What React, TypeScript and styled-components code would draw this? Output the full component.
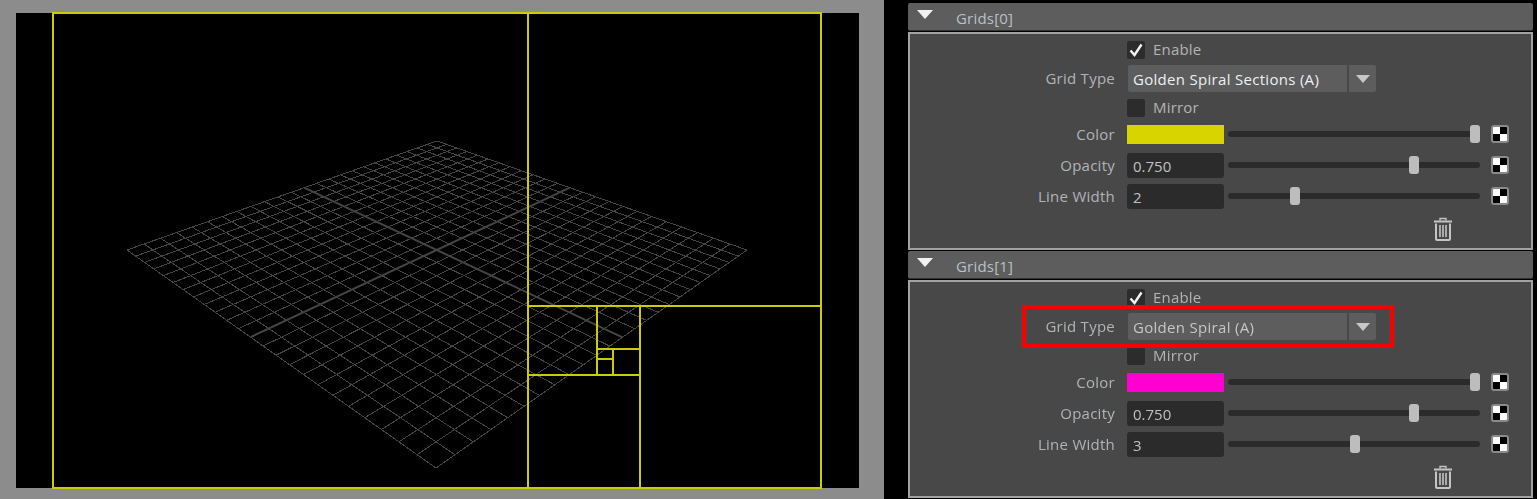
import { createGlobalStyle } from "styled-components";
import styled from "styled-components";

const GlobalStyle = createGlobalStyle`
  html, body {
    margin: 0;
    padding: 0;
    background: #000;
  }
  body {
    font-family: "Open Sans", "Noto Sans", sans-serif;
  }
`;

const Page = styled.div`
  width: 1537px;
  height: 499px;
  display: flex;
  overflow: hidden;
  background: #000;
`;

const LeftPane = styled.div`
  width: 884px;
  height: 499px;
  padding: 13px 25px 11px 16px;
  box-sizing: border-box;
  background: #8c8c8c;
`;

const Viewport = styled.div`
  width: 843px;
  height: 475px;
  background: #000;
`;

const ViewSvg = styled.svg`
  display: block;
  overflow: visible;
`;

const RightPane = styled.div`
  width: 625px;
  margin-left: 24px;
  padding-top: 3px;
  display: flex;
  flex-direction: column;
  filter: blur(0.35px);
`;

const Header = styled.div`
  height: 28px;
  box-sizing: border-box;
  display: flex;
  align-items: center;
  padding-left: 9px;
  background: #5d5d5d;
  border-radius: 2px;
  border-bottom: 1px solid #333;
`;

const HeaderArrow = styled.div`
  width: 0;
  height: 0;
  border-left: 8px solid transparent;
  border-right: 8px solid transparent;
  border-top: 9px solid #f2f2f2;
  margin-top: -4px;
`;

const HeaderTitle = styled.span`
  margin-left: 23px;
  padding-top: 2px;
  font-size: 15px;
  letter-spacing: 0.2px;
  color: #b8c0c8;
`;

const Body = styled.div`
  height: 218px;
  box-sizing: border-box;
  margin-top: 1px;
  margin-bottom: 1px;
  padding-top: 1px;
  background: #484848;
  border: 2px solid #a2a2a2;
`;

const CheckRow = styled.div`
  height: 29px;
  display: flex;
  align-items: center;
  padding-left: 217px;
`;

const CheckBox = styled.div`
  width: 18px;
  height: 18px;
  border-radius: 2px;
  background: #2c2c2c;
  display: flex;
  align-items: center;
  justify-content: center;
`;

const CheckLabel = styled.span`
  margin-left: 8px;
  margin-top: -2px;
  font-size: 15px;
  letter-spacing: 0.2px;
  color: #b4b4b4;
`;

const FieldRow = styled.div<{ $h: number }>`
  height: ${(p) => p.$h}px;
  position: relative;
  display: flex;
  align-items: center;
  & + & {
    margin-top: 6px;
  }
`;

const Label = styled.div`
  width: 205px;
  margin-right: 12px;
  margin-top: -2px;
  text-align: right;
  font-size: 15px;
  letter-spacing: 0.25px;
  color: #b0b4b8;
`;

const Select = styled.div`
  display: flex;
  height: 27px;
  margin-left: 1px;
  gap: 2px;
`;

const SelectValue = styled.div<{ $bright: boolean }>`
  width: 214px;
  height: 26px;
  padding-left: 5px;
  padding-top: 1px;
  border-radius: 2px 0 0 2px;
  background: #5d5d5d;
  display: flex;
  align-items: center;
  font-size: 15px;
  letter-spacing: 0.3px;
  color: ${(p) => (p.$bright ? "#ecf0f4" : "#c6c6c6")};
`;

const SelectButton = styled.div`
  width: 27px;
  border-radius: 0 2px 2px 0;
  background: #5d5d5d;
  display: flex;
  align-items: center;
  justify-content: center;
`;

const SelectArrow = styled.div`
  width: 0;
  height: 0;
  border-left: 7px solid transparent;
  border-right: 7px solid transparent;
  border-top: 8px solid #c8c8c8;
`;

const RedBox = styled.div`
  position: absolute;
  left: 112px;
  top: -7px;
  width: 372px;
  height: 43px;
  box-sizing: border-box;
  border: 4px solid #fa0000;
`;

const Swatch = styled.div<{ $color: string }>`
  width: 97px;
  height: 19px;
  background: ${(p) => p.$color};
`;

const NumberField = styled.div`
  width: 97px;
  height: 25px;
  box-sizing: border-box;
  padding: 1px 0 0 6px;
  border-radius: 3px;
  background: #2b2b2b;
  display: flex;
  align-items: center;
  font-size: 15px;
  color: #c0c0c0;
`;

const Slider = styled.div`
  position: relative;
  width: 252px;
  height: 6px;
  margin-left: 4px;
  margin-top: -2px;
  border-radius: 3px;
  background: #2b2b2b;
`;

const Thumb = styled.div`
  position: absolute;
  top: -6px;
  width: 10px;
  height: 18px;
  margin-left: -5px;
  border-radius: 3px;
  background: #bdbdbd;
`;

const Checker = styled.div`
  width: 18px;
  height: 18px;
  margin-left: 11px;
  margin-top: -2px;
  box-sizing: border-box;
  border: 2px solid #8a8a8a;
  border-radius: 3px;
  background: conic-gradient(#000 0 25%, #fff 0 50%, #000 0 75%, #fff 0);
`;

const TrashRow = styled.div`
  height: 30px;
  margin-top: 5px;
  padding-left: 522px;
  display: flex;
  align-items: center;
`;

const TrashIcon = () => (
  <svg width="22" height="26" viewBox="0 0 22 26" fill="none" stroke="#c4c4c4">
    <path d="M2 5.5h18" strokeWidth="2" />
    <path d="M8 4.5V2.5h6v2" strokeWidth="1.4" />
    <path d="M4 7.5v15.5q0 1 1 1h12q1 0 1-1V7.5" strokeWidth="2" />
    <path d="M8 9v12M11 9v12M14 9v12" strokeWidth="1.6" />
  </svg>
);

const CheckMark = () => (
  <svg width="16" height="16" viewBox="0 0 16 16" fill="none">
    <path d="M2.5 8.5 6.5 13 13.5 2.5" stroke="#f4f4f4" strokeWidth="2.4" />
  </svg>
);

// projective map from the unit square onto the floor grid corners
type Pt = [number, number];
const [p0, p1, p2, p3]: Pt[] = [
  [437, 141],
  [747, 250],
  [436, 468],
  [127, 250],
];

const project = (u: number, v: number): Pt => {
  const dx1 = p1[0] - p2[0];
  const dx2 = p3[0] - p2[0];
  const dx3 = p0[0] - p1[0] + p2[0] - p3[0];
  const dy1 = p1[1] - p2[1];
  const dy2 = p3[1] - p2[1];
  const dy3 = p0[1] - p1[1] + p2[1] - p3[1];
  const den = dx1 * dy2 - dx2 * dy1;
  const g = (dx3 * dy2 - dx2 * dy3) / den;
  const h = (dx1 * dy3 - dx3 * dy1) / den;
  const a = p1[0] - p0[0] + g * p1[0];
  const b = p3[0] - p0[0] + h * p3[0];
  const d = p1[1] - p0[1] + g * p1[1];
  const e = p3[1] - p0[1] + h * p3[1];
  const w = g * u + h * v + 1;
  return [(a * u + b * v + p0[0]) / w, (d * u + e * v + p0[1]) / w];
};

const DIVISIONS = 24;

const gridLines = Array.from({ length: DIVISIONS + 1 }, (_, i) => i / DIVISIONS).flatMap((t) => [
  [project(t, 0), project(t, 1)],
  [project(0, t), project(1, t)],
]);

const toPath = (lines: Pt[][]) =>
  lines.map(([a, b]) => `M${a[0].toFixed(1)} ${a[1].toFixed(1)}L${b[0].toFixed(1)} ${b[1].toFixed(1)}`).join("");

const heavyLines = [
  [project(0.5, 0), project(0.5, 1)],
  [project(0, 0.5), project(1, 0.5)],
];

const goldenPath = [
  "M53 13H821V488H53Z",
  "M528 13V488",
  "M528 306H821",
  "M640 306V488",
  "M528 375H640",
  "M597 306V375",
  "M597 349H640",
  "M613 349V375",
  "M597 359H613",
].join("");

type GridProps = {
  index: number;
  type: string;
  bright: boolean;
  color: string;
  opacityPos: number;
  width: string;
  widthPos: number;
  highlight?: boolean;
};

const GridSection = ({ index, type, bright, color, opacityPos, width, widthPos, highlight }: GridProps) => (
  <>
    <Header>
      <HeaderArrow />
      <HeaderTitle>Grids[{index}]</HeaderTitle>
    </Header>
    <Body>
      <CheckRow>
        <CheckBox>
          <CheckMark />
        </CheckBox>
        <CheckLabel>Enable</CheckLabel>
      </CheckRow>
      <FieldRow $h={29}>
        <Label>Grid Type</Label>
        <Select>
          <SelectValue $bright={bright}>{type}</SelectValue>
          <SelectButton>
            <SelectArrow />
          </SelectButton>
        </Select>
        {highlight && <RedBox />}
      </FieldRow>
      <CheckRow>
        <CheckBox />
        <CheckLabel>Mirror</CheckLabel>
      </CheckRow>
      <FieldRow $h={25}>
        <Label>Color</Label>
        <Swatch $color={color} />
        <Slider>
          <Thumb style={{ left: 247 }} />
        </Slider>
        <Checker />
      </FieldRow>
      <FieldRow $h={25}>
        <Label>Opacity</Label>
        <NumberField>0.750</NumberField>
        <Slider>
          <Thumb style={{ left: opacityPos }} />
        </Slider>
        <Checker />
      </FieldRow>
      <FieldRow $h={25}>
        <Label>Line Width</Label>
        <NumberField>{width}</NumberField>
        <Slider>
          <Thumb style={{ left: widthPos }} />
        </Slider>
        <Checker />
      </FieldRow>
      <TrashRow>
        <TrashIcon />
      </TrashRow>
    </Body>
  </>
);

const App = () => (
  <Page>
    <GlobalStyle />
    <LeftPane>
      <Viewport>
        <ViewSvg width="843" height="475" viewBox="16 13 843 475">
          <path d={toPath(gridLines)} stroke="#444" strokeWidth="1" fill="none" shapeRendering="crispEdges" />
          <path d={toPath(heavyLines)} stroke="#444" strokeWidth="2" fill="none" />
          <path d={goldenPath} stroke="#cccc00" strokeWidth="2" fill="none" shapeRendering="crispEdges" />
        </ViewSvg>
      </Viewport>
    </LeftPane>
    <RightPane>
      <GridSection index={0} type="Golden Spiral Sections (A)" bright color="#d8d400" opacityPos={186} width="2" widthPos={67} />
      <GridSection index={1} type="Golden Spiral (A)" bright={false} color="#ff00d0" opacityPos={186} width="3" widthPos={127} highlight />
    </RightPane>
  </Page>
);

export default App;
